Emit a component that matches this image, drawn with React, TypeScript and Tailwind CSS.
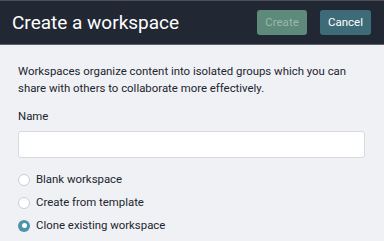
export default function App() {
  const opts = [
    { label: "Blank workspace", checked: false },
    { label: "Create from template", checked: false },
    { label: "Clone existing workspace", checked: true },
  ];
  return (
    <div className="w-[384px] h-[241px] bg-[#f0f1f5] overflow-hidden" style={{ fontFamily: "Roboto, 'Liberation Sans', sans-serif" }}>
      <div className="h-[45px] bg-[#222833] border-t border-b border-t-[#4a4f58] border-b-[#5c616a] flex items-center justify-between pl-[12px] pr-[13px]">
        <div className="text-[19px] text-white leading-none">Create a workspace</div>
        <div className="flex gap-[13px]">
          <button className="w-[50px] h-[25px] rounded-[3px] bg-[#5d8a7a] text-[#9ab7ab] text-[11.5px]">Create</button>
          <button className="w-[51px] h-[25px] rounded-[3px] bg-[#3e6b78] text-white text-[11.5px]">Cancel</button>
        </div>
      </div>
      <div className="px-[18px] pt-[17.5px]">
        <p className="text-[11.4px] leading-[17px] text-[#20252f]">
          Workspaces organize content into isolated groups which you can share with others to collaborate more effectively.
        </p>
        <div className="mt-[11px] text-[11.4px] leading-[17px] text-[#20252f]">Name</div>
        <div className="mt-[6.5px] h-[27px] w-[347px] bg-white border border-[#d6d9de] rounded-[3px]" />
        <div className="mt-[10px] flex flex-col">
          {opts.map((o) => (
            <div key={o.label} className="flex items-center h-[23px] text-[11.4px] text-[#20252f]">
              {o.checked ? (
                <span className="w-[12px] h-[12px] rounded-full bg-[#4e93a9] flex items-center justify-center">
                  <span className="w-[5px] h-[5px] rounded-full bg-white" />
                </span>
              ) : (
                <span className="w-[12px] h-[12px] rounded-full bg-white border border-[#c9cdd3]" />
              )}
              <span className="ml-[6px]">{o.label}</span>
            </div>
          ))}
        </div>
      </div>
    </div>
  );
}
